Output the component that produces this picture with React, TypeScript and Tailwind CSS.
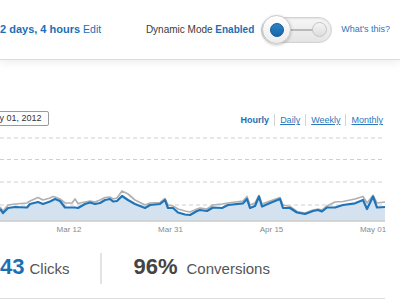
// Traffic dashboard crop: header with dynamic-mode toggle, hourly chart, stat row.

const BLUE = '#1b6fb5'

// [x, blue series y, gray series y] in page pixels
const SERIES: [number, number, number][] = [
  [0, 209, 207], [3, 213, 211], [8, 208, 205], [15, 207, 204], [27, 207.5, 203], [30, 204, 201],
  [38, 202, 197.5], [43, 204, 200], [50, 201.5, 198], [53, 200, 196.5], [55, 199, 197], [60, 201, 199],
  [65, 207.5, 203], [72, 207.5, 203], [75, 207.5, 199], [78, 208, 203.5], [85, 204, 202], [90, 202.5, 201],
  [95, 204, 202], [100, 203, 200], [105, 200, 197.5], [110, 199, 197], [113, 201.5, 199], [117, 201, 198],
  [122, 196, 191], [128, 200, 194], [135, 204, 200], [145, 208, 205], [150, 205, 203], [160, 204, 202.5],
  [165, 200, 198.5], [168, 208, 205], [173, 208, 206], [178, 212.5, 209], [185, 214.5, 211], [190, 215, 212],
  [197, 211, 209], [200, 210, 208], [207, 211, 209], [213, 207.5, 205], [222, 208, 204], [228, 205, 203],
  [243, 203.3, 201], [247, 199, 196.5], [250, 208, 205], [255, 206, 203], [259, 196.5, 195.5], [262, 206.5, 204],
  [270, 203, 201], [280, 199, 197.5], [283, 208, 205], [290, 208, 206.5], [297, 212.5, 211.5], [305, 214, 213],
  [313, 211, 210], [318, 210, 209], [322, 211.5, 210], [327, 207.5, 206], [335, 207.5, 202], [343, 205, 201.5],
  [355, 203.3, 199], [363, 200, 196.5], [367, 209, 203], [373, 196.5, 195.5], [377, 207.5, 203], [385, 207, 202],
]

const TOP = 130 // page y of the chart svg

function line(idx: 1 | 2) {
  return SERIES.map((p, i) => `${i ? 'L' : 'M'}${p[0]} ${p[idx] - TOP}`).join(' ')
}

function Toggle() {
  return (
    <div className="relative w-[71px] h-[26px] rounded-full border border-[#d2d2d2] bg-gradient-to-b from-[#f6f6f6] to-[#e4e4e4] shadow-[inset_0_1px_2px_rgba(0,0,0,0.08)]">
      {/* rail between knob and off stop */}
      <div className="absolute left-[28px] top-[11.5px] w-[24px] h-[2px] bg-[#b9b9b9]" />
      {/* off stop */}
      <div className="absolute left-[50px] top-[4.5px] w-[15px] h-[15px] rounded-full border border-[#c4c4c4] bg-gradient-to-b from-[#f4f4f4] to-[#dedede]" />
      {/* knob */}
      <div className="absolute left-[0px] top-[-2.5px] w-[29px] h-[29px] rounded-full border border-[#c6c6c6] bg-gradient-to-b from-white to-[#ececec] shadow-[0_1px_3px_rgba(0,0,0,0.25)] flex items-center justify-center">
        <div className="w-[14px] h-[14px] rounded-full border border-[#15578f] bg-gradient-to-b from-[#2b82c8] to-[#1765a8]" />
      </div>
    </div>
  )
}

function Chart() {
  const grid = [8, 29.5, 52, 75]
  const blue = line(1)
  const labels: [number, string][] = [[69, 'Mar 12'], [170.5, 'Mar 31'], [271.5, 'Apr 15'], [373, 'May 01']]
  return (
    <svg width={400} height={105} viewBox="0 0 400 105" className="block">
      {grid.map((y) => (
        <line key={y} x1={0} x2={385} y1={y} y2={y} stroke="#cfcfcf" strokeWidth={1} strokeDasharray="4 3" />
      ))}
      <path d={`${blue} L385 90.5 L0 90.5 Z`} fill="#d3e2ee" />
      <path d={line(2)} fill="none" stroke="#b0b0b0" strokeWidth={1.7} strokeLinejoin="round" />
      <path d={blue} fill="none" stroke="#1f73b8" strokeWidth={2.2} strokeLinejoin="round" />
      <line x1={0} x2={385} y1={91} y2={91} stroke="#c9c9c9" strokeWidth={1.5} />
      {labels.map(([x, t]) => (
        <text key={t} x={x} y={102} textAnchor="middle" fontSize={8} fill="#8a8a8a" fontFamily="'Liberation Sans', Arial, sans-serif">
          {t}
        </text>
      ))}
    </svg>
  )
}

export default function App() {
  return (
    <div className="w-[400px] h-[300px] overflow-hidden bg-white font-['Liberation_Sans',Arial,sans-serif]">
      {/* header */}
      <div className="relative z-10 h-[60px] flex items-center bg-white border-b border-[#dcdcdc] shadow-[0_3px_8px_rgba(0,0,0,0.07)]">
        <div className="flex items-baseline gap-[3px] text-[11px]" style={{ color: BLUE }}>
          <span className="font-bold">2 days, 4 hours</span>
          <span className="text-[10.5px]">Edit</span>
        </div>
        <div className="ml-auto flex items-center pr-[10px]">
          <span className="text-[10px] text-[#3a3a3a]">
            Dynamic Mode <span className="font-bold text-[#1b6fb5]">Enabled</span>
          </span>
          <div className="ml-[7px]">
            <Toggle />
          </div>
          <span className="ml-[9px] text-[9px] text-[#2a78bb]">What's this?</span>
        </div>
      </div>

      {/* chart controls */}
      <div className="pt-[51px] pr-[17px] flex items-end justify-between">
        <div className="h-[15px] flex items-center border border-[#9a9a9a] rounded-[2px] bg-white -ml-[17px] pl-[3px] pr-[6px] text-[9px] text-[#333]">
          May 01, 2012
        </div>
        <div className="flex items-center text-[9px] text-[#2a78bb] leading-[12px]">
          <span className="font-bold text-[#1b6fb5]">Hourly</span>
          <span className="mx-[5px] w-px h-[12px] bg-[#d4d4d4]" />
          <span className="underline">Daily</span>
          <span className="mx-[5px] w-px h-[12px] bg-[#d4d4d4]" />
          <span className="underline">Weekly</span>
          <span className="mx-[5px] w-px h-[12px] bg-[#d4d4d4]" />
          <span className="underline">Monthly</span>
        </div>
      </div>

      <div className="mt-[4px]">
        <Chart />
      </div>

      {/* stats */}
      <div className="mt-[18px] h-[31px] flex items-center">
        <div className="flex items-baseline gap-[5px]">
          <span className="text-[22px] font-bold leading-none" style={{ color: BLUE }}>43</span>
          <span className="text-[15px] text-[#555]">Clicks</span>
        </div>
        <div className="ml-[31px] w-[2px] h-[31px] bg-[#e3e3e3]" />
        <div className="ml-[31px] flex items-baseline gap-[9px]">
          <span className="text-[22px] font-bold leading-none text-[#444]">96%</span>
          <span className="text-[15px] text-[#555]">Conversions</span>
        </div>
      </div>
      <div className="mt-[14px] w-[385px] h-px bg-[#dedede]" />
    </div>
  )
}
